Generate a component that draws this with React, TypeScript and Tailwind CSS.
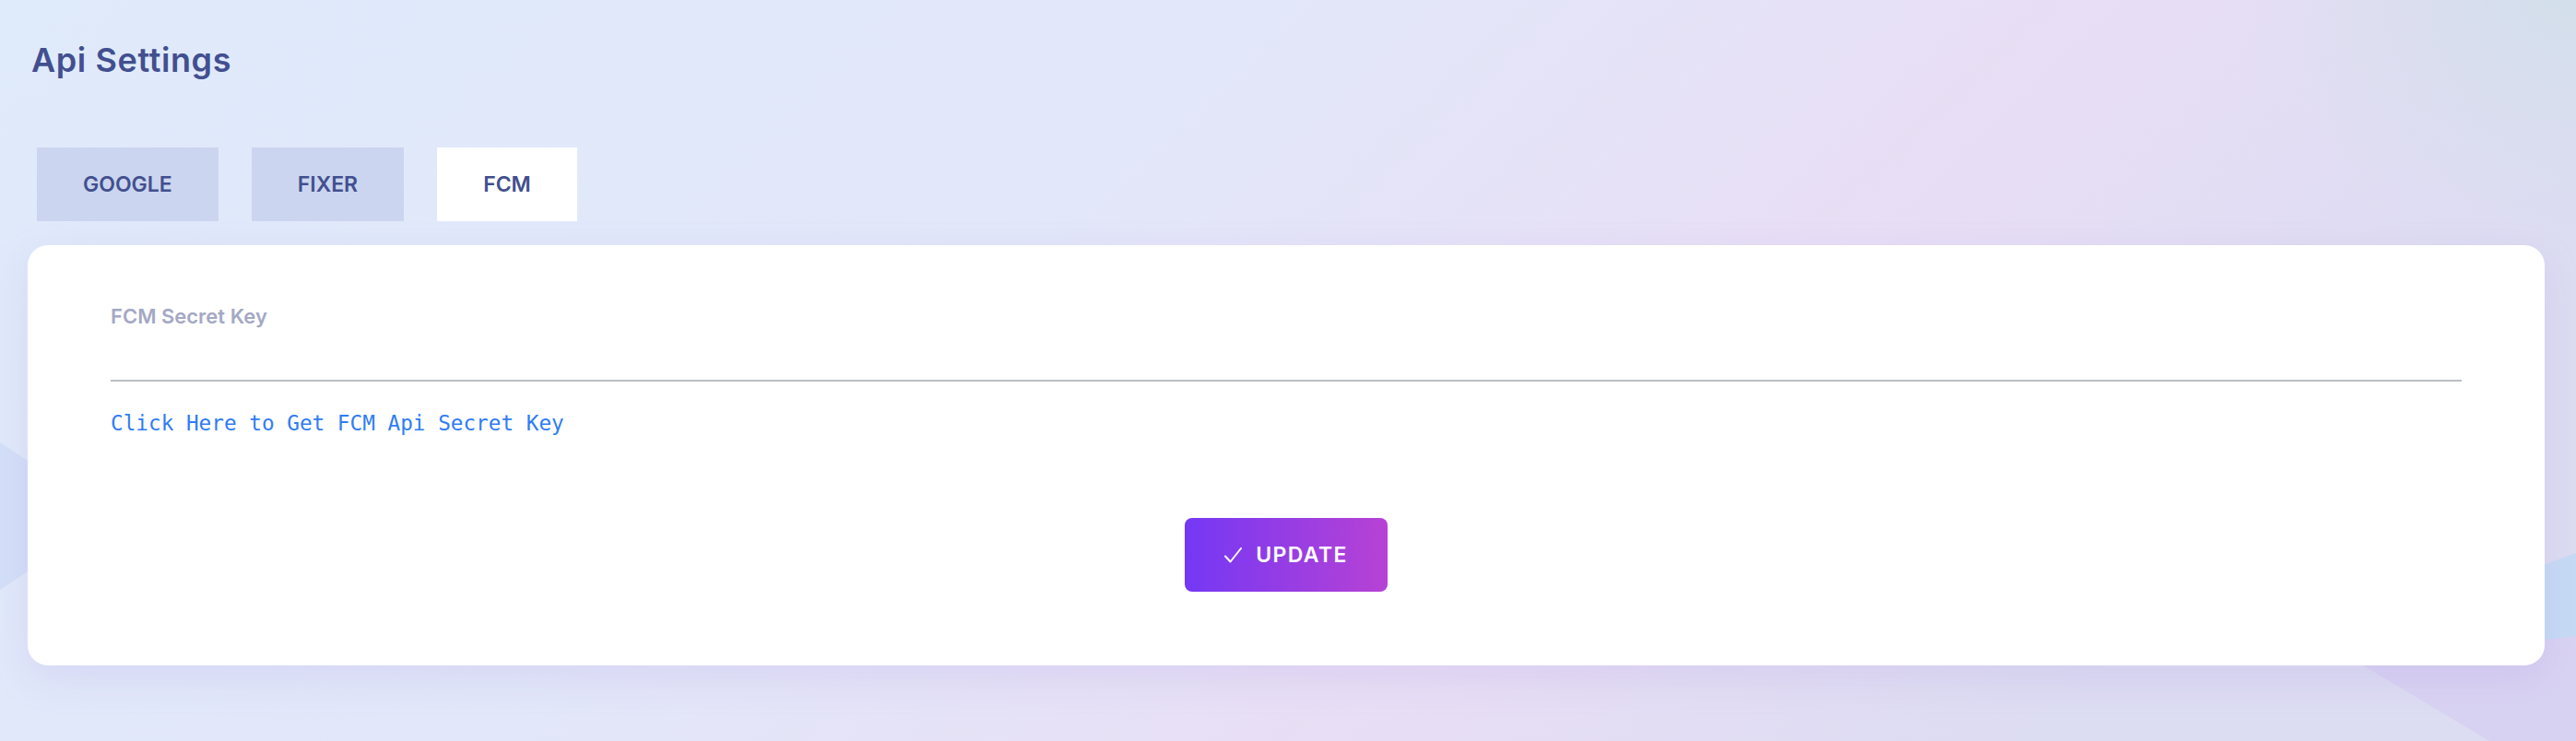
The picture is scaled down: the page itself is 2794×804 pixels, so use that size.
import { useState } from 'react'

const tabs = ['GOOGLE', 'FIXER', 'FCM']

function Backdrop() {
    return (
        <svg
            className="absolute inset-0 h-full w-full"
            viewBox="0 0 2794 804"
            preserveAspectRatio="none"
            aria-hidden="true"
        >
            <defs>
                <linearGradient id="bg" x1="0" y1="0" x2="1" y2="0.3">
                    <stop offset="0" stopColor="#dfeafb" />
                    <stop offset="0.45" stopColor="#e2e7f9" />
                    <stop offset="0.75" stopColor="#e8def5" />
                    <stop offset="1" stopColor="#dcdcf2" />
                </linearGradient>
                <radialGradient id="tr" cx="1" cy="0" r="0.6">
                    <stop offset="0" stopColor="#d3dfeb" stopOpacity="1" />
                    <stop offset="1" stopColor="#d3dfeb" stopOpacity="0" />
                </radialGradient>
            </defs>
            <rect width="2794" height="804" fill="url(#bg)" />
            <rect x="2200" y="0" width="594" height="420" fill="url(#tr)" />
            <polygon points="2740,620 2794,600 2794,810 2740,780" fill="#c6daf4" />
            <polygon points="2560,720 2794,690 2794,804 2700,804" fill="#d8d2f2" />
            <polygon points="0,480 60,520 60,600 0,640" fill="#cfdcf8" opacity="0.8" />
        </svg>
    )
}

export default function App() {
    const [active, setActive] = useState('FCM')
    const [secret, setSecret] = useState('')

    return (
        <div className="relative min-h-[804px] w-full overflow-hidden font-['Inter',sans-serif]">
            <Backdrop />

            <div className="relative flex flex-col">
                <h1 className="ml-[34px] mt-[43px] text-[36px] leading-[44px] font-semibold tracking-[0.6px] text-[#424f8f]">
                    Api Settings
                </h1>

                <div className="ml-[40px] mt-[73px] flex gap-[36px]">
                    {tabs.map(tab => (
                        <button
                            key={tab}
                            onClick={() => setActive(tab)}
                            className={`flex h-[80px] items-center px-[50px] text-[23px] font-semibold text-[#424f8f] ${
                                active === tab ? 'bg-white' : 'bg-[#cbd5ef]'
                            }`}
                        >
                            {tab}
                        </button>
                    ))}
                </div>

                <div className="ml-[30px] mr-[34px] mt-[26px] rounded-[22px] bg-white px-[90px] pt-[63px] pb-[80px] shadow-[0_14px_40px_rgba(170,150,225,0.2)]">
                    <label className="block text-[22px] leading-[28px] font-semibold text-[#a3a8c4]">
                        FCM Secret Key
                    </label>
                    <input
                        value={secret}
                        onChange={e => setSecret(e.target.value)}
                        className="block h-[57px] w-full border-b-2 border-[#bcbfc4] bg-transparent text-[22px] text-[#424f8f] outline-none"
                    />
                    <a
                        href="#"
                        className="mt-[30px] block w-fit font-['DejaVu_Sans_Mono',monospace] text-[22.7px] leading-[30px] text-[#2f7cf5]"
                    >
                        Click Here to Get FCM Api Secret Key
                    </a>

                    <div className="mt-[88px] flex justify-center">
                        <button className="flex h-[80px] items-center gap-[15px] rounded-[8px] bg-[linear-gradient(90deg,#7438f4,#b742d4)] px-[43px] text-[23px] font-semibold tracking-[1.4px] text-white">
                            <svg width="19" height="17" viewBox="0 0 19 17" fill="none" aria-hidden="true">
                                <path
                                    d="M1 9.5 L6.5 15.5 L18 1"
                                    stroke="white"
                                    strokeWidth="2"
                                    strokeLinecap="round"
                                    strokeLinejoin="round"
                                />
                            </svg>
                            UPDATE
                        </button>
                    </div>
                </div>
            </div>
        </div>
    )
}
